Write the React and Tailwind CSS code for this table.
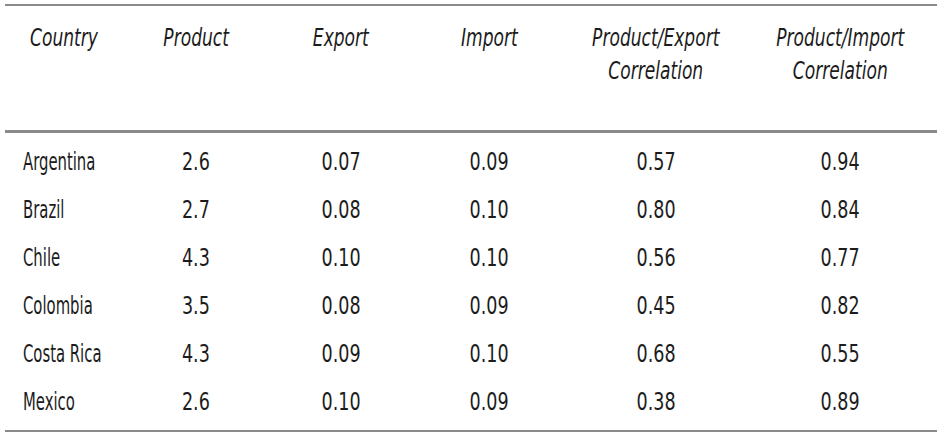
import React from 'react';

const rows = [
    ['Argentina', '2.6', '0.07', '0.09', '0.57', '0.94'],
    ['Brazil', '2.7', '0.08', '0.10', '0.80', '0.84'],
    ['Chile', '4.3', '0.10', '0.10', '0.56', '0.77'],
    ['Colombia', '3.5', '0.08', '0.09', '0.45', '0.82'],
    ['Costa Rica', '4.3', '0.09', '0.10', '0.68', '0.55'],
    ['Mexico', '2.6', '0.10', '0.09', '0.38', '0.89'],
];

const cols = 'grid grid-cols-[115px_152px_138px_158px_176px_193px]';

// condensed look: squeeze the glyphs horizontally
const Head = ({ children, left }) => (
    <div className={left ? 'pl-[25px] whitespace-nowrap' : 'text-center whitespace-nowrap'}>
        <span className={`inline-block scale-x-[0.76] ${left ? 'origin-left' : 'origin-center'}`}>{children}</span>
    </div>
);

const App = () => {
    return (
        <div className="w-[941px] h-[439px] bg-white pt-[4px] pl-[5px] text-[#1c1c1c]" style={{ fontFamily: '"DejaVu Sans Condensed", "DejaVu Sans", sans-serif' }}>
            <div className="w-[932px] border-t-2 border-b-2 border-[#8a8a8a]">
                {/* header */}
                <div className={`${cols} h-[127px] pt-[15px] border-b-[3px] border-[#8a8a8a] italic text-[25px] leading-[33px]`}>
                    <Head left>Country</Head>
                    <Head>Product</Head>
                    <Head>Export</Head>
                    <Head>Import</Head>
                    <Head>Product/Export<br />Correlation</Head>
                    <Head>Product/Import<br />Correlation</Head>
                </div>

                {/* body */}
                <div className="pt-[5px] pb-[4px] text-[25px] leading-[30px]">
                    {rows.map((r) => (
                        <div key={r[0]} className={`${cols} h-[48px] items-center whitespace-nowrap`}>
                            <div className="pl-[18px]">
                                <span className="inline-block scale-x-[0.66] origin-left">{r[0]}</span>
                            </div>
                            {r.slice(1).map((v, i) => (
                                <div key={i} className="text-center">
                                    <span className="inline-block scale-x-[0.78]">{v}</span>
                                </div>
                            ))}
                        </div>
                    ))}
                </div>
            </div>
        </div>
    );
};

export default App;
